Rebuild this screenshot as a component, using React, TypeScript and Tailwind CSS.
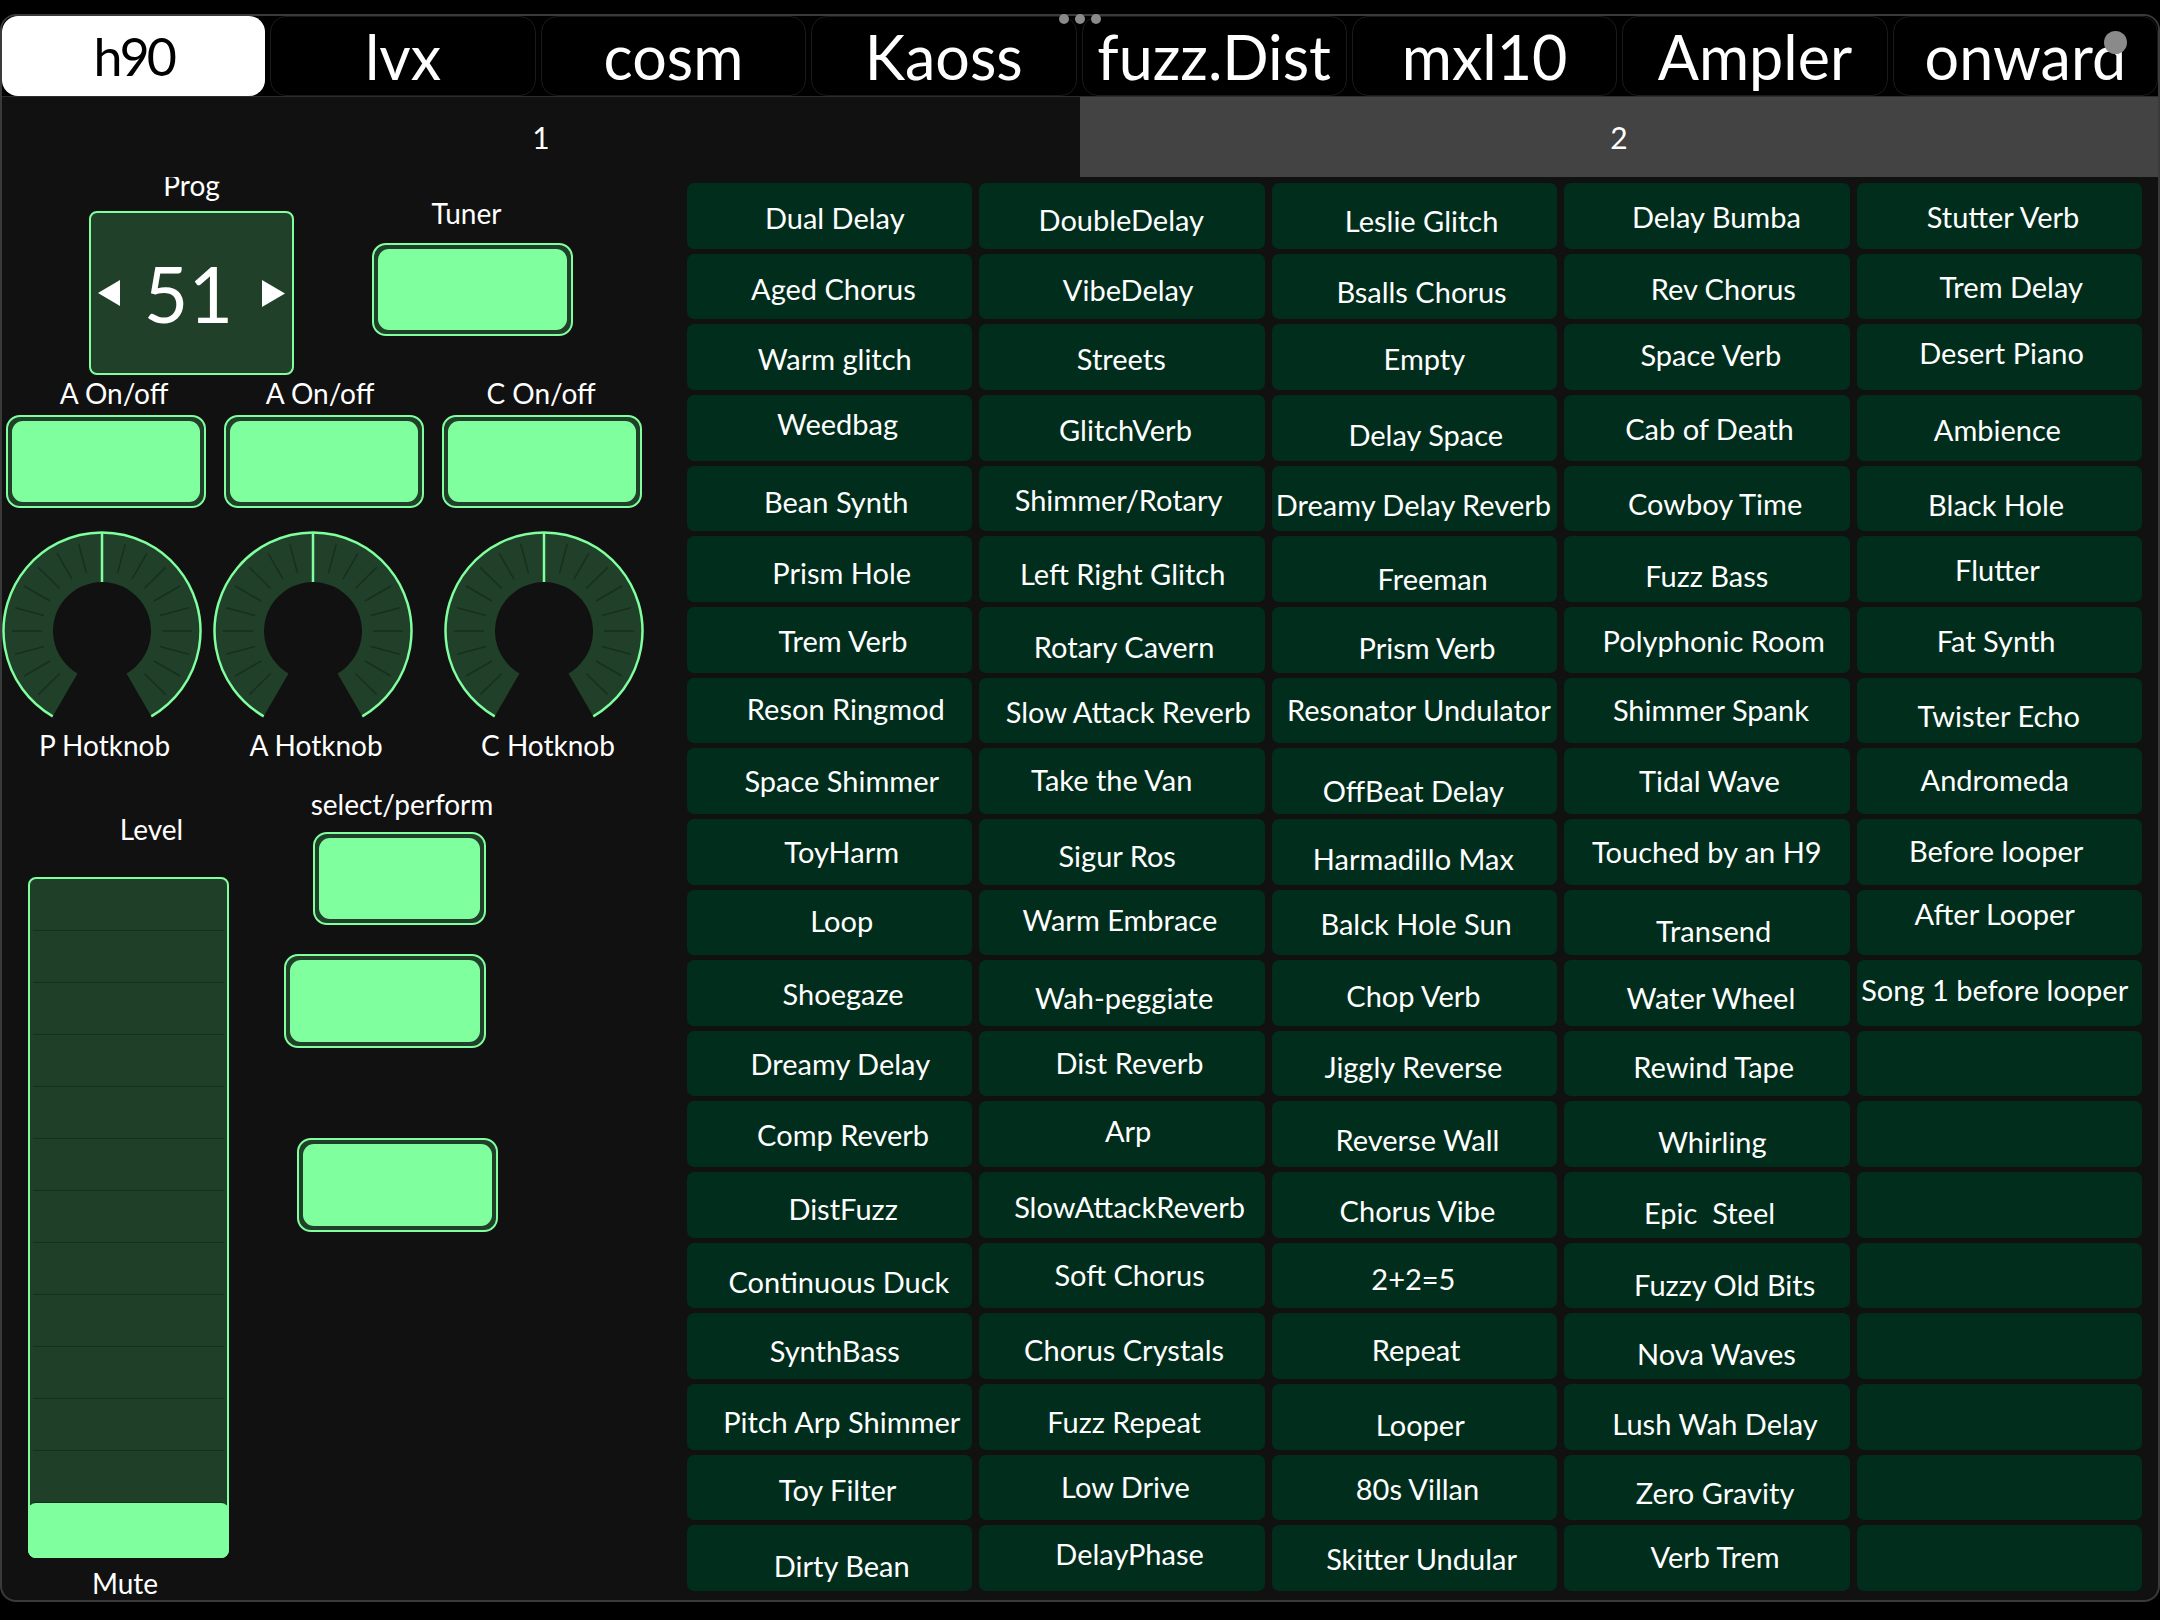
import React from "react";

const K = 2160 / 1568;

// grid geometry (page px)
const GRID_X = 687;
const GRID_Y = 183;
const COL_W = (1455 - 4 * 7) / 5;
const ROW_H = (1408 - 19 * 5) / 20;

const tabs = ["h90", "lvx", "cosm", "Kaoss", "fuzz.Dist", "mxl10", "Ampler", "onward"];

// [name, x, y] -- where the label sits in the preview
type Preset = [string, number, number];

const columns: Preset[][] = [
  [
    ["Dual Delay", 606, 159],
    ["Aged Chorus", 605, 210],
    ["Warm glitch", 606, 261],
    ["Weedbag", 608, 308],
    ["Bean Synth", 607, 365],
    ["Prism Hole", 611, 416],
    ["Trem Verb", 612, 466],
    ["Reson Ringmod", 614, 515],
    ["Space Shimmer", 611, 567],
    ["ToyHarm", 611, 619],
    ["Loop", 611, 669],
    ["Shoegaze", 612, 722],
    ["Dreamy Delay", 610, 773],
    ["Comp Reverb", 612, 824],
    ["DistFuzz", 612, 878],
    ["Continuous Duck", 609, 931],
    ["SynthBass", 606, 981],
    ["Pitch Arp Shimmer", 611, 1033],
    ["Toy Filter", 608, 1082],
    ["Dirty Bean", 611, 1137],
  ],
  [
    ["DoubleDelay", 814, 160],
    ["VibeDelay", 819, 211],
    ["Streets", 814, 261],
    ["GlitchVerb", 817, 313],
    ["Shimmer/Rotary", 812, 363],
    ["Left Right Glitch", 815, 417],
    ["Rotary Cavern", 816, 470],
    ["Slow Attack Reverb", 819, 517],
    ["Take the Van", 807, 566],
    ["Sigur Ros", 811, 622],
    ["Warm Embrace", 813, 668],
    ["Wah-peggiate", 816, 725],
    ["Dist Reverb", 820, 772],
    ["Arp", 819, 821],
    ["SlowAttackReverb", 820, 877],
    ["Soft Chorus", 820, 926],
    ["Chorus Crystals", 816, 980],
    ["Fuzz Repeat", 816, 1033],
    ["Low Drive", 817, 1080],
    ["DelayPhase", 820, 1128],
  ],
  [
    ["Leslie Glitch", 1032, 161],
    ["Bsalls Chorus", 1032, 212],
    ["Empty", 1034, 261],
    ["Delay Space", 1035, 316],
    ["Dreamy Delay Reverb", 1026, 367],
    ["Freeman", 1040, 420],
    ["Prism Verb", 1036, 471],
    ["Resonator Undulator", 1030, 516],
    ["OffBeat Delay", 1026, 574],
    ["Harmadillo Max", 1026, 624],
    ["Balck Hole Sun", 1028, 671],
    ["Chop Verb", 1026, 724],
    ["Jiggly Reverse", 1026, 775],
    ["Reverse Wall", 1029, 828],
    ["Chorus Vibe", 1029, 880],
    ["2+2=5", 1026, 929],
    ["Repeat", 1028, 980],
    ["Looper", 1031, 1035],
    ["80s Villan", 1029, 1081],
    ["Skitter Undular", 1032, 1132],
  ],
  [
    ["Delay Bumba", 1246, 158],
    ["Rev Chorus", 1251, 210],
    ["Space Verb", 1242, 258],
    ["Cab of Death", 1241, 312],
    ["Cowboy Time", 1245, 366],
    ["Fuzz Bass", 1239, 418],
    ["Polyphonic Room", 1244, 466],
    ["Shimmer Spank", 1242, 516],
    ["Tidal Wave", 1241, 567],
    ["Touched by an H9", 1239, 619],
    ["Transend", 1244, 676],
    ["Water Wheel", 1242, 725],
    ["Rewind Tape", 1244, 775],
    ["Whirling", 1243, 829],
    ["Epic  Steel", 1241, 881],
    ["Fuzzy Old Bits", 1252, 933],
    ["Nova Waves", 1246, 983],
    ["Lush Wah Delay", 1245, 1034],
    ["Zero Gravity", 1245, 1084],
    ["Verb Trem", 1245, 1130],
  ],
  [
    ["Stutter Verb", 1454, 158],
    ["Trem Delay", 1460, 209],
    ["Desert Piano", 1453, 256],
    ["Ambience", 1450, 313],
    ["Black Hole", 1449, 367],
    ["Flutter", 1450, 414],
    ["Fat Synth", 1449, 466],
    ["Twister Echo", 1451, 520],
    ["Andromeda", 1448, 566],
    ["Before looper", 1449, 618],
    ["After Looper", 1448, 664],
    ["Song 1 before looper", 1448, 719],
  ],
];

const Toggle = ({ className }: { className: string }) => (
  <div className={`rounded-[14px] border-2 border-[#80ff9e] bg-[#21402a] p-[4px] ${className}`}>
    <div className="h-full w-full rounded-[11px] bg-[#80ff9e]" />
  </div>
);

const pt = (r: number, deg: number) => {
  const a = (deg * Math.PI) / 180;
  return [100 + r * Math.sin(a), 100 - r * Math.cos(a)];
};

const Knob = () => {
  const [ox1, oy1] = pt(98.5, -150);
  const [ox2, oy2] = pt(98.5, 150);
  const [ix1, iy1] = pt(49, -150);
  const [ix2, iy2] = pt(49, 150);
  const ticks = [15, 30, 45, 60, 75, 90, 105, 120, 135].flatMap((d) => [d, -d]);
  return (
    <svg width="200" height="200" viewBox="0 0 200 200">
      <path
        d={`M ${ox1} ${oy1} A 98.5 98.5 0 1 1 ${ox2} ${oy2} L ${ix2} ${iy2} A 49 49 0 1 0 ${ix1} ${iy1} Z`}
        fill="#21402a"
      />
      {ticks.map((d) => {
        const [x1, y1] = pt(60, d);
        const [x2, y2] = pt(90, d);
        return <line key={d} x1={x1} y1={y1} x2={x2} y2={y2} stroke="#16301f" strokeWidth="1.5" />;
      })}
      <path d={`M ${ox1} ${oy1} A 98.5 98.5 0 1 1 ${ox2} ${oy2}`} fill="none" stroke="#80ff9e" strokeWidth="2.5" />
      <line x1="100" y1="51" x2="100" y2="1.5" stroke="#80ff9e" strokeWidth="2.5" />
    </svg>
  );
};

const Label = ({ text, className = "" }: { text: string; className?: string }) => (
  <div className={`h-[28px] whitespace-nowrap text-center text-[28px] leading-[28px] text-white ${className}`}>{text}</div>
);

const LeftPanel = () => (
  <div className="flex w-[685px] shrink-0 flex-col overflow-hidden">
    {/* prog + tuner */}
    <div className="flex items-start">
      <div className="ml-[87px] flex w-[205px] flex-col items-center">
        <Label text="Prog" className="-mt-[6px]" />
        <div className="mt-[12px] flex h-[164px] w-[205px] items-center justify-between rounded-[8px] border-2 border-[#80ff9e] bg-[#21402a] px-[7px]">
          <svg width="22" height="26" viewBox="0 0 22 26">
            <polygon points="22,0 22,26 0,13" fill="white" />
          </svg>
          <span className="pr-[5px] text-[77px] leading-none text-white">51</span>
          <svg width="23" height="27" viewBox="0 0 23 27">
            <polygon points="0,0 0,27 23,13.5" fill="white" />
          </svg>
        </div>
      </div>
      <div className="ml-[78px] flex w-[201px] flex-col">
        <Label text="Tuner" className="mt-[22px] pr-[12px]" />
        <Toggle className="mt-[16px] h-[93px] w-[201px]" />
      </div>
    </div>

    {/* on/off */}
    <div className="ml-[4px] mt-[4px] flex gap-[18px]">
      <div className="flex w-[200px] flex-col">
        <Label text="A On/off" className="pl-[16px]" />
        <Toggle className="mt-[8px] h-[93px] w-[200px]" />
      </div>
      <div className="flex w-[200px] flex-col">
        <Label text="A On/off" className="pr-[8px]" />
        <Toggle className="mt-[8px] h-[93px] w-[200px]" />
      </div>
      <div className="flex w-[200px] flex-col">
        <Label text="C On/off" className="pr-[2px]" />
        <Toggle className="mt-[8px] h-[93px] w-[200px]" />
      </div>
    </div>

    {/* hotknobs */}
    <div className="mt-[23px] flex">
      <div className="flex w-[200px] flex-col">
        <Knob />
        <Label text="P Hotknob" className="pl-[5px]" />
      </div>
      <div className="ml-[11px] flex w-[200px] flex-col">
        <Knob />
        <Label text="A Hotknob" className="pl-[6px]" />
      </div>
      <div className="ml-[31px] flex w-[200px] flex-col">
        <Knob />
        <Label text="C Hotknob" className="pl-[8px]" />
      </div>
    </div>

    {/* level + select/perform */}
    <div className="flex items-start">
      <div className="ml-[26px] flex w-[201px] flex-col">
        <Label text="Level" className="mt-[56px] pl-[46px]" />
        <div className="mt-[34px] flex h-[681px] flex-col rounded-[8px] border-2 border-[#80ff9e] bg-[#203f28]">
          {Array.from({ length: 12 }).map((_, i) => (
            <div key={i} className="mx-[3px] h-[52px] shrink-0 border-b border-[#16301f]" />
          ))}
          <div className="-mx-[2px] -mb-[2px] h-[55px] rounded-[8px] bg-[#80ff9e]" />
        </div>
        <Label text="Mute" className="mt-[11px] pr-[7px]" />
      </div>
      <div className="ml-[55px] flex w-[214px] flex-col items-start">
        <Label text="select/perform" className="mt-[31px] w-full pl-[22px]" />
        <Toggle className="ml-[29px] mt-[14px] h-[93px] w-[173px]" />
        <Toggle className="mt-[29px] h-[94px] w-[202px]" />
        <Toggle className="ml-[13px] mt-[90px] h-[94px] w-[201px]" />
      </div>
    </div>
  </div>
);

const PresetGrid = () => (
  <div className="mr-[16px] mt-[6px] grid h-[1408px] flex-1 grid-flow-col grid-cols-5 grid-rows-[repeat(20,minmax(0,1fr))] gap-x-[7px] gap-y-[5px]">
    {columns.map((col, c) =>
      Array.from({ length: 20 }).map((_, r) => {
        const p = col[r];
        if (!p) return <div key={`${c}-${r}`} className="rounded-[7px] bg-[#012d1c]" />;
        const cx = GRID_X + COL_W / 2 + c * (COL_W + 7);
        const cy = GRID_Y + ROW_H / 2 + r * (ROW_H + 5);
        const dx = p[1] * K - cx;
        const dy = p[2] * K - cy - 1;
        return (
          <div key={`${c}-${r}`} className="flex items-center justify-center rounded-[7px] bg-[#012d1c]">
            <span
              className="whitespace-pre text-[29px] leading-none text-white"
              style={{ transform: `translate(${dx.toFixed(1)}px, ${dy.toFixed(1)}px)` }}
            >
              {p[0]}
            </span>
          </div>
        );
      })
    )}
  </div>
);

export default function App() {
  return (
    <div className="relative h-[1620px] w-[2160px] overflow-hidden bg-black pt-[14px] font-['Lato',sans-serif]">
      <div className="flex h-[1588px] flex-col overflow-hidden rounded-[16px] border-2 border-[#3a3a3a] bg-[#111111]">
        <div className="flex h-[80px] shrink-0 gap-[5px] bg-black">
          {tabs.map((t, i) => (
            <div
              key={t}
              className={
                i === 0
                  ? "flex flex-1 items-center justify-center rounded-[16px] bg-white text-[52px] leading-none tracking-[-3px] text-black"
                  : "flex flex-1 items-center justify-center rounded-[16px] border border-[#1a1a1a] bg-black text-[61px] leading-none text-white"
              }
            >
              {t}
            </div>
          ))}
        </div>
        <div className="flex h-[81px] shrink-0 border-t border-[#2c2c2c] text-[30px] text-white">
          <div className="flex flex-1 items-center justify-center">1</div>
          <div className="flex flex-1 items-center justify-center bg-[#434343]">2</div>
        </div>
        <div className="flex flex-1">
          <LeftPanel />
          <PresetGrid />
        </div>
      </div>

      {/* status overlays */}
      <div className="absolute left-[1059px] top-[14px] flex gap-[6px]">
        <div className="h-[10px] w-[10px] rounded-full bg-[#8a8a8a]" />
        <div className="h-[10px] w-[10px] rounded-full bg-[#8a8a8a]" />
        <div className="h-[10px] w-[10px] rounded-full bg-[#8a8a8a]" />
      </div>
      <div className="absolute left-[2104px] top-[31px] h-[23px] w-[23px] rounded-full bg-[#8a8a8a]" />
    </div>
  );
}
